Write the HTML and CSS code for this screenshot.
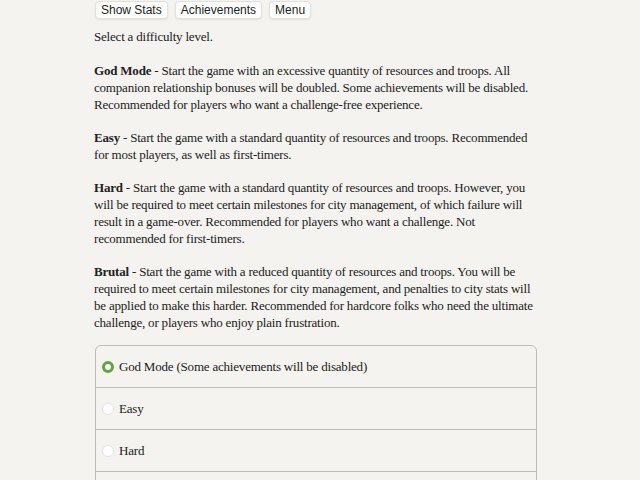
FILE: index.html
```html
<!DOCTYPE html>
<html>
<head>
    <title>Difficulty</title>
    <link rel="stylesheet" href="styles.css">
</head>
<body>

<div class="page">
    <div class="topbar">
        <button class="top-btn">Show Stats</button>
        <button class="top-btn">Achievements</button>
        <button class="top-btn">Menu</button>
    </div>

    <p class="intro">Select a difficulty level.</p>

    <p><b>God Mode</b> - Start the game with an excessive quantity of resources and troops. All companion relationship bonuses will be doubled. Some achievements will be disabled. Recommended for players who want a challenge-free experience.</p>

    <p><b>Easy</b> - Start the game with a standard quantity of resources and troops. Recommended for most players, as well as first-timers.</p>

    <p><b>Hard</b> - Start the game with a standard quantity of resources and troops. However, you will be required to meet certain milestones for city management, of which failure will result in a game-over. Recommended for players who want a challenge. Not recommended for first-timers.</p>

    <p><b>Brutal</b> - Start the game with a reduced quantity of resources and troops. You will be required to meet certain milestones for city management, and penalties to city stats will be applied to make this harder. Recommended for hardcore folks who need the ultimate challenge, or players who enjoy plain frustration.</p>

    <div class="choices">
        <label class="choice"><span class="radio checked"></span>God Mode (Some achievements will be disabled)</label>
        <label class="choice"><span class="radio"></span>Easy</label>
        <label class="choice"><span class="radio"></span>Hard</label>
        <label class="choice"><span class="radio"></span>Brutal</label>
    </div>
</div>

</body>
</html>
```

FILE: styles.css
```css
body {
    margin: 0;
    background: #f4f3ef;
    color: #222;
    font-family: "Liberation Serif", serif;
    font-size: 13px;
    letter-spacing: -0.2px;
}
.page { width: 443px; margin-left: 94px; }
.topbar { display: flex; gap: 7px; padding: 1px 0 0 1px; }
.top-btn {
    font-family: "Liberation Sans", Arial, sans-serif;
    font-size: 12px; color: #222; letter-spacing: 0;
    margin: 0;
    background: #fff; border: 1px solid #e2e1dc; border-radius: 4px;
    padding: 1px 5px; height: 18px; line-height: 14px;
    box-shadow: 0 1px 2px rgba(0,0,0,0.08);
}
p { margin: 16px 0 0; line-height: 17px; }
.intro { margin-top: 9px; margin-bottom: 17px; }
.intro + p { margin-top: 0; }
.choices {
    margin: 14px 0 0 1px; width: 440px;
    border: 1px solid #bdbcb8; border-radius: 6px;
    background: #f4f3ef;
}
.choice {
    display: flex; align-items: center; gap: 5px;
    height: 41px; padding-left: 6px;
    border-top: 1px solid #bdbcb8;
}
.choice:first-child { border-top: none; }
.radio {
    width: 10px; height: 10px; border-radius: 50%;
    background: #fff; border: 1px solid #e4e3df; flex: none;
}
.radio.checked {
    width: 6px; height: 6px;
    border: 3px solid #5fa542; background: #fff;
}
```
